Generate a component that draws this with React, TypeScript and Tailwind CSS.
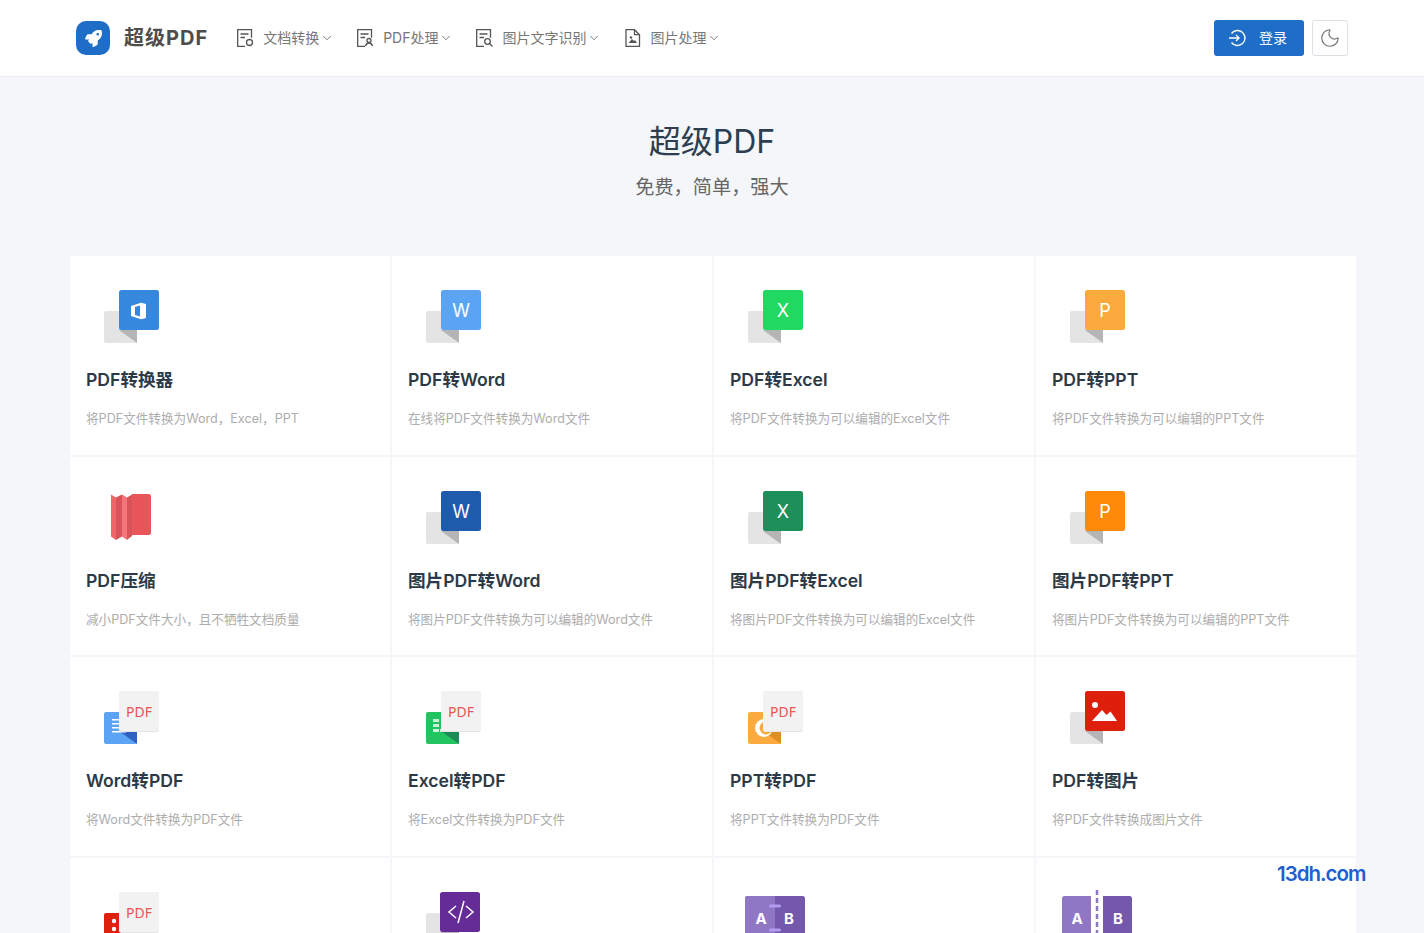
import { ChevronDown, Moon } from "lucide-react";
import { FaRocket } from "react-icons/fa";
import type { ReactNode } from "react";

const font = "font-['Inter','Noto_Sans_CJK_SC',sans-serif]";

// back sheet + folded corner + coloured front sheet
const Sheet = ({ color, label, children }: { color: string; label?: string; children?: ReactNode }) => (
  <svg width="56" height="54" viewBox="0 0 56 54" className="block">
    <rect x="0" y="21" width="33" height="32" rx="2" fill="#e4e4e4" />
    <path d="M15 40h18v13z" fill="#b5b5b5" />
    <rect x="15" y="0" width="40" height="40" rx="2.5" fill={color} />
    {label && (
      <text x="35" y="27" textAnchor="middle" fontSize="18" fill="#fff" fontFamily="Inter, sans-serif">
        {label}
      </text>
    )}
    {children}
  </svg>
);

// coloured back sheet with the light PDF sheet in front
const ToPdf = ({ color, fold, children }: { color: string; fold: string; children?: ReactNode }) => (
  <svg width="56" height="54" viewBox="0 0 56 54" className="block">
    <rect x="0" y="21" width="33" height="32" rx="2" fill={color} />
    <path d="M15 40h18v13z" fill={fold} />
    {children}
    <rect x="15" y="0" width="40" height="41" rx="2.5" fill="#e4e4e4" />
    <rect x="15" y="0" width="40" height="40" rx="2.5" fill="#f2f2f2" />
    <text x="35" y="26" textAnchor="middle" fontSize="14" fill="#ea5455" fontFamily="'Noto Sans', sans-serif">
      PDF
    </text>
  </svg>
);

const OfficeIcon = () => (
  <Sheet color="#3588de">
    <path fillRule="evenodd" d="M27 16l10-3.300 5 1.300v14l-5 1.300-10-3.300zM31 17v8l5 1.500v-11z" fill="#fff" />
  </Sheet>
);

const CompressIcon = () => (
  <svg width="56" height="54" viewBox="0 0 56 54" className="block">
    <path d="M7 3.500l5 3v42.500l-5-3.500z" fill="#f0666a" />
    <path d="M12 6.500l6-3v42l-6 3.500z" fill="#d9545a" />
    <path d="M18 3.500l5 3v42.500l-5-3.500z" fill="#f5767a" />
    <path d="M23 6.500l5-3v41.500l-5 4z" fill="#d9545a" />
    <path d="M28 3h16.500A2.500 2.500 0 0 1 47 5.500v36a2.500 2.500 0 0 1-2.500 2.500H28z" fill="#e8565c" />
  </svg>
);

const WordToPdf = () => (
  <ToPdf color="#5ba4f4" fold="#3061c2">
    <g fill="#fff">
      <rect x="8" y="28" width="7" height="1.500" />
      <rect x="8" y="32" width="7" height="1.500" />
      <rect x="8" y="36" width="7" height="1.500" />
      <rect x="8" y="40" width="14" height="1.500" />
    </g>
  </ToPdf>
);

const ExcelToPdf = () => (
  <ToPdf color="#21c45f" fold="#1b8a55">
    <g fill="#c9f3da">
      <rect x="7" y="28" width="6" height="3" />
      <rect x="7" y="33" width="6" height="3" />
      <rect x="7" y="38" width="6" height="3" />
      <rect x="14" y="38" width="6" height="3" />
    </g>
  </ToPdf>
);

const PptToPdf = () => (
  <ToPdf color="#fbab3e" fold="#de8f21">
    <circle cx="16" cy="37" r="9" fill="#fff" />
    <circle cx="18" cy="37" r="6.500" fill="#fbab3e" />
  </ToPdf>
);

const ImageSheet = () => (
  <Sheet color="#dd1f0c">
    <circle cx="25" cy="14" r="3" fill="#fff" />
    <path d="M22 30l10-11 4.500 5 4-3.500L47 30z" fill="#fff" />
  </Sheet>
);

const ImageToPdf = () => (
  <ToPdf color="#dd1f0c" fold="#a31508">
    <circle cx="10" cy="29" r="2.200" fill="#fff" />
    <circle cx="10" cy="37" r="2.200" fill="#fff" />
  </ToPdf>
);

const HtmlIcon = () => (
  <svg width="56" height="54" viewBox="0 0 56 54" className="block">
    <rect x="0" y="21" width="33" height="32" rx="2" fill="#e4e4e4" />
    <path d="M14 40h19v13z" fill="#b5b5b5" />
    <rect x="14" y="0" width="40" height="40" rx="2.500" fill="#652b96" />
    <path d="M30 14l-7 6 7 6M40 14l7 6-7 6M32 31l6-22" fill="none" stroke="#fff" strokeWidth="1.500" />
  </svg>
);

const MergeIcon = () => (
  <svg width="60" height="54" viewBox="0 0 60 54" className="block -ml-[3px]">
    <rect x="0" y="4" width="60" height="50" rx="2.500" fill="#7358ab" />
    <path d="M2.500 4H30v50H0V6.500A2.500 2.500 0 0 1 2.500 4z" fill="#8f77c6" />
    <rect x="24" y="12.500" width="12" height="3" rx="1.500" fill="#b39cf0" />
    <rect x="24" y="36.500" width="12" height="3" rx="1.500" fill="#b39cf0" />
    <text x="16" y="31.500" textAnchor="middle" fontSize="15" fontWeight="700" fill="#fff" fontFamily="Inter, sans-serif">A</text>
    <text x="44" y="31.500" textAnchor="middle" fontSize="15" fontWeight="700" fill="#fff" fontFamily="Inter, sans-serif">B</text>
  </svg>
);

const SplitIcon = () => (
  <svg width="70" height="60" viewBox="0 0 70 60" className="block -ml-[8px] -mt-[2px]">
    <path d="M2.500 6H29v54H0V8.500A2.500 2.500 0 0 1 2.500 6z" fill="#8f77c6" />
    <path d="M41 6h26.500A2.500 2.500 0 0 1 70 8.500V60H41z" fill="#7358ab" />
    <line x1="35" y1="0" x2="35" y2="60" stroke="#8f77c6" strokeWidth="2.500" strokeDasharray="5 3" />
    <text x="15" y="34" textAnchor="middle" fontSize="15" fontWeight="700" fill="#fff" fontFamily="Inter, sans-serif">A</text>
    <text x="56" y="34" textAnchor="middle" fontSize="15" fontWeight="700" fill="#fff" fontFamily="Inter, sans-serif">B</text>
  </svg>
);

// last row sits below the fold, only the icons reach the screen
const tools: { title?: string; desc?: string; icon: ReactNode }[] = [
  { title: "PDF转换器", desc: "将PDF文件转换为Word，Excel，PPT", icon: <OfficeIcon /> },
  { title: "PDF转Word", desc: "在线将PDF文件转换为Word文件", icon: <Sheet color="#5ba4f4" label="W" /> },
  { title: "PDF转Excel", desc: "将PDF文件转换为可以编辑的Excel文件", icon: <Sheet color="#21d860" label="X" /> },
  { title: "PDF转PPT", desc: "将PDF文件转换为可以编辑的PPT文件", icon: <Sheet color="#fbab3e" label="P" /> },
  { title: "PDF压缩", desc: "减小PDF文件大小，且不牺牲文档质量", icon: <CompressIcon /> },
  { title: "图片PDF转Word", desc: "将图片PDF文件转换为可以编辑的Word文件", icon: <Sheet color="#1e5bad" label="W" /> },
  { title: "图片PDF转Excel", desc: "将图片PDF文件转换为可以编辑的Excel文件", icon: <Sheet color="#1e8e5a" label="X" /> },
  { title: "图片PDF转PPT", desc: "将图片PDF文件转换为可以编辑的PPT文件", icon: <Sheet color="#ff8a0a" label="P" /> },
  { title: "Word转PDF", desc: "将Word文件转换为PDF文件", icon: <WordToPdf /> },
  { title: "Excel转PDF", desc: "将Excel文件转换为PDF文件", icon: <ExcelToPdf /> },
  { title: "PPT转PDF", desc: "将PPT文件转换为PDF文件", icon: <PptToPdf /> },
  { title: "PDF转图片", desc: "将PDF文件转换成图片文件", icon: <ImageSheet /> },
  { icon: <ImageToPdf /> },
  { icon: <HtmlIcon /> },
  { icon: <MergeIcon /> },
  { icon: <SplitIcon /> },
];

// nav glyphs all share the same page outline, only the corner badge changes
const NavGlyph = ({ children }: { children: ReactNode }) => (
  <svg width="18" height="18" viewBox="0 0 18 18" fill="none" stroke="#555" strokeWidth="1.300" className="shrink-0">
    <path d="M8 17.300H.7V.7h13.800v8" />
    <path d="M3.500 5h8M3.500 8.500h4.500" />
    {children}
  </svg>
);

const navItems = [
  { label: "文档转换", ml: "ml-[29px]", icon: <NavGlyph><circle cx="12.500" cy="13.500" r="3" /></NavGlyph> },
  { label: "PDF处理", ml: "ml-[23px]", icon: <NavGlyph><circle cx="12" cy="11.500" r="2" /><path d="M8.500 17c.5-2 1.500-3 3.500-3s3 1 3.500 3" /></NavGlyph> },
  { label: "图片文字识别", ml: "ml-[23px]", icon: <NavGlyph><circle cx="11.500" cy="12.500" r="2.800" /><path d="M13.500 14.500l3 3" /></NavGlyph> },
  {
    label: "图片处理",
    ml: "ml-[23px]",
    icon: (
      <svg width="18" height="18" viewBox="0 0 18 18" fill="none" stroke="#555" strokeWidth="1.300" className="shrink-0">
        <path d="M2 .7h8.500l5 5v11.600H2z" />
        <path d="M10.500 .7V5.700H15.500" />
        <circle cx="7" cy="8.500" r="1.200" fill="#555" stroke="none" />
        <path d="M4.500 14l3.500-4 2 2 1-1 2 3z" fill="#555" stroke="none" />
      </svg>
    ),
  },
];

const Header = () => (
  <header className="h-[77px] shrink-0 bg-white border-b border-[#e9ecf1] flex items-center justify-between pl-[76px] pr-[76px]">
    <div className="flex items-center">
      <div className="w-[34px] h-[34px] rounded-[10px] bg-[#1e6ec8] flex items-center justify-center">
        <FaRocket className="text-white w-[17px] h-[17px]" />
      </div>
      <span className="ml-[14px] text-[20px] font-bold text-[#4d4d4d] tracking-[1px]">超级PDF</span>
      <nav className="flex items-center">
        {navItems.map((item) => (
          <div key={item.label} className={`flex items-center ${item.ml}`}>
            {item.icon}
            <span className="ml-[8px] pb-[2px] text-[14px] text-[#777]">{item.label}</span>
            <ChevronDown className="w-[14px] h-[14px] ml-[1px] text-[#666]" strokeWidth={1.500} />
          </div>
        ))}
      </nav>
    </div>
    <div className="flex items-center gap-2">
      <button className="w-[90px] h-[36px] pr-[4px] rounded-[3px] bg-[#1e6ec8] text-white text-[14px] flex items-center justify-center gap-[12px]">
        <svg width="20" height="20" viewBox="0 0 20 20" fill="none" stroke="#fff" strokeWidth="1.400">
          <path d="M4.500 5.500A7.500 7.500 0 1 1 4.500 14.500" />
          <path d="M2 10h10M9 7l3 3-3 3" />
        </svg>
        <span className="pb-[2px]">登录</span>
      </button>
      <button className="w-[36px] h-[36px] rounded-[3px] border border-[#dcdfe6] bg-white flex items-center justify-center">
        <Moon className="w-[22px] h-[22px] text-[#777]" strokeWidth={1.300} />
      </button>
    </div>
  </header>
);

export default function App() {
  return (
    <div className={`${font} relative h-screen overflow-hidden bg-[#f4f6f9] flex flex-col`}>
      <Header />
      <div className="pt-[45px] text-center">
        <h1 className="text-[32px] leading-[40px] text-[#2c3e50]">超级PDF</h1>
        <p className="mt-[13px] text-[19.200px] leading-[24px] text-[#666]">免费，简单，强大</p>
      </div>
      <div className="mt-[57px] ml-[70px] grid grid-cols-[repeat(4,320px)] gap-[2px] auto-rows-[198.500px]">
        {tools.map((tool, i) => (
          <div key={i} className="bg-white pl-[16px] pt-[34px]">
            <div className="ml-[18px] h-[54px]">{tool.icon}</div>
            {tool.title && (
              <>
                <h3 className="mt-[21px] text-[17.600px] leading-[30px] font-semibold text-[#2c3a47]">{tool.title}</h3>
                <p className="mt-[14px] text-[12.600px] leading-[20px] text-[#adadad]">{tool.desc}</p>
              </>
            )}
          </div>
        ))}
      </div>
      <span className="absolute left-[1277px] top-[860px] text-[20.500px] leading-[28px] font-semibold tracking-[-1px] text-[#1f5fd0]">13dh.com</span>
    </div>
  );
}
